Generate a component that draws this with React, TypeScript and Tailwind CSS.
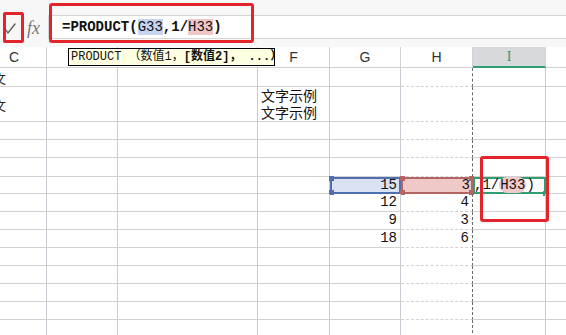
import { FC, ReactNode } from "react";

const mono = "font-['Liberation_Mono','Noto_Sans_CJK_SC',monospace]";

type Row = { h: string; cells?: Record<number, ReactNode> };

const Fragment: FC = () => (
  <span className="-ml-[7px] text-[13px] leading-none font-['Noto_Sans_CJK_SC',sans-serif] text-[#222]">文</span>
);

const Handle: FC<{ pos: string; color: string }> = ({ pos, color }) => (
  <span className={`absolute h-[5px] w-[5px] ${pos} ${color}`} />
);

const rows: Row[] = [
  { h: "h-[19px]", cells: { 0: <Fragment /> } },
  {
    h: "h-[35px]",
    cells: {
      0: <Fragment />,
      3: (
        <span className="pl-[3px] text-[14px] leading-[17px] font-['Noto_Sans_CJK_SC',sans-serif] text-[#111] whitespace-nowrap">
          文字示例
          <br />
          文字示例
        </span>
      ),
    },
  },
  { h: "h-[18px]" },
  { h: "h-[18px]" },
  { h: "h-[19px]" },
  { h: "h-[17px]" },
  { h: "h-[18px]", cells: { 4: "12", 5: "4" } },
  { h: "h-[18px]", cells: { 4: "9", 5: "3" } },
  { h: "h-[18px]", cells: { 4: "18", 5: "6" } },
  { h: "h-[18px]" },
  { h: "h-[18px]" },
  { h: "h-[18px]" },
  { h: "h-[18px]" },
  { h: "h-[18px]" },
];

const headers = ["C", "", "", "F", "G", "H", "I", ""];

const Cell: FC<{ col: number; h: string; children?: ReactNode }> = ({ col, h, children }) => {
  const numeric = col === 4 || col === 5;
  const right =
    col === 5 ? "border-r border-dashed border-r-[#6b6b6b]" : col === 7 ? "" : "border-r border-r-[#c9cbd3]";
  return (
    <div
      className={`relative flex ${h} items-center border-b border-b-[#d2d2d2] ${right} ${
        numeric ? `justify-end pr-[3px] ${mono} text-[14px] text-[#111]` : ""
      }`}
    >
      {children}
    </div>
  );
};

const App: FC = () => {
  return (
    <div className="relative h-[335px] w-[566px] overflow-hidden bg-white select-none">
      {/* formula bar */}
      <div className="relative flex h-[47px] bg-[#f7f7f7]">
        <div className="flex w-[48px] items-center pt-[8px]">
          <svg className="ml-[5px] h-[14px] w-[12px]" viewBox="0 0 12 14" fill="none">
            <path d="M1 9 L3 12 L10 3" stroke="#555" strokeWidth="1.3" strokeLinecap="round" />
          </svg>
          <span className="ml-[10px] text-[18px] italic leading-none text-[#777] font-['Liberation_Serif',serif]">fx</span>
        </div>
        <div className="mt-[15px] flex h-[24px] flex-1 items-center border-y border-l border-[#d6d6d6] bg-white pl-[13px]">
          <span className={`${mono} text-[14px] font-bold text-[#111]`}>
            =PRODUCT(<span className="bg-[#c6d4ee] font-normal">G33</span>,1/
            <span className="bg-[#efc6c6] font-normal">H33</span>)
          </span>
        </div>
        <div className="pointer-events-none absolute top-[3px] left-[49px] h-[40px] w-[205px] rounded-[3px] border-[3px] border-[#e3242b]" />
        <div className="pointer-events-none absolute top-[12px] left-[3px] h-[31px] w-[21px] rounded-[2px] border-[3px] border-[#e3242b]" />
      </div>

      {/* sheet */}
      <div className="grid grid-cols-[47px_71px_140px_72px_71px_72px_73px_20px]">
        {headers.map((h, i) => (
          <div
            key={`h${i}`}
            className={`flex h-[21px] items-center justify-center text-[14px] font-['Liberation_Sans',sans-serif] ${
              i === 0 ? "justify-start pl-[9px]" : ""
            } ${
              i === 6
                ? "border-b-2 border-b-[#2f9e72] bg-[#d7d9dd] font-['Liberation_Serif',serif] text-[#2f9e72]"
                : "border-b border-b-[#d2d2d2] text-[#333]"
            } ${i === 7 ? "" : "border-r border-r-[#d0d2d8]"}`}
          >
            {h}
          </div>
        ))}
        {rows.map((r, ri) =>
          Array.from({ length: 8 }).map((_, ci) => {
            const content = r.cells?.[ci];
            if (ri === 5 && ci === 4) {
              return (
                <div key={`${ri}-${ci}`} className={`relative ${r.h} flex items-center justify-end border-2 border-[#4f6fae] bg-[#d9e1f3] pr-[2px] ${mono} text-[14px] text-[#111]`}>
                  15
                  <Handle pos="-top-[3px] -left-[3px]" color="bg-[#4f6fae]" />
                  <Handle pos="-bottom-[3px] -left-[3px]" color="bg-[#4f6fae]" />
                </div>
              );
            }
            if (ri === 5 && ci === 5) {
              return (
                <div key={`${ri}-${ci}`} className={`relative ${r.h} flex items-center justify-end border-2 border-[#b56464] bg-[#efc8c8] pr-[1px] ${mono} text-[14px] text-[#111]`}>
                  3
                  <Handle pos="-top-[3px] -left-[3px]" color="bg-[#b56464]" />
                  <Handle pos="-bottom-[3px] -left-[3px]" color="bg-[#b56464]" />
                  <Handle pos="-top-[3px] -right-[3px]" color="bg-[#b56464]" />
                  <Handle pos="-bottom-[3px] -right-[3px]" color="bg-[#b56464]" />
                </div>
              );
            }
            if (ri === 5 && ci === 6) {
              return (
                <div key={`${ri}-${ci}`} className={`relative ${r.h} flex items-center border-2 border-[#2f9e72] bg-white ${mono} text-[14px] text-[#111] whitespace-nowrap`}>
                  <span className="-ml-[1px]">
                    ,1/<span className="rounded-full bg-[#efcaca] px-[1px]">H33</span>)
                  </span>
                  <span className="absolute -right-[4px] -bottom-[4px] h-[5px] w-[5px] bg-[#2f9e72]" />
                </div>
              );
            }
            return (
              <Cell key={`${ri}-${ci}`} col={ci} h={r.h}>
                {content}
              </Cell>
            );
          })
        )}
      </div>

      {/* function tooltip */}
      <div className="absolute top-[48px] left-[68px] flex h-[18px] w-[207px] items-center border border-black bg-[#ffffe1] pl-[2px] text-[12px] whitespace-nowrap text-[#111] font-['Liberation_Mono','Noto_Sans_CJK_SC',monospace]">
        PRODUCT （数值1， <b>[数值2]， ...）</b>
      </div>

      {/* red highlight on active cell */}
      <div className="pointer-events-none absolute top-[156px] left-[480px] h-[66px] w-[69px] rounded-[3px] border-[3px] border-[#e3242b]" />
    </div>
  );
};

export default App;
